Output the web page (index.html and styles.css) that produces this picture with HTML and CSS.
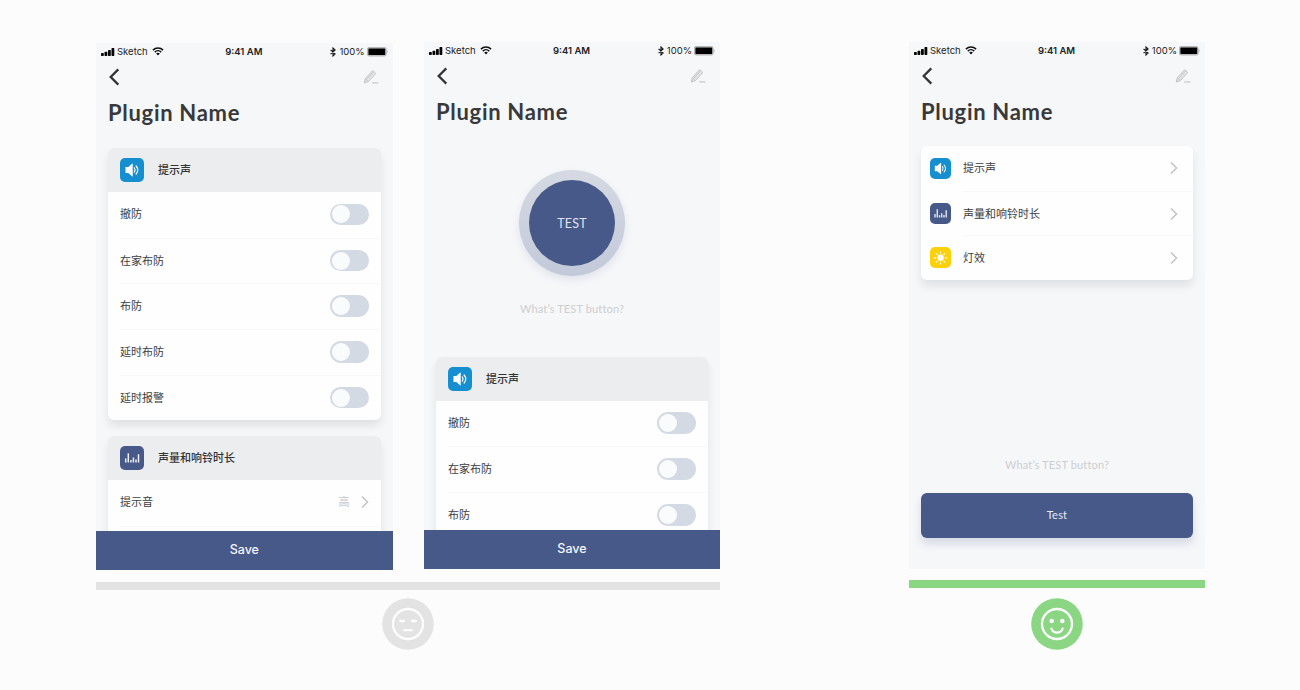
FILE: index.html
```
<!DOCTYPE html>
<html lang="zh-CN">
<head>
<meta charset="utf-8">
<title>Plugin Name</title>
<link rel="stylesheet" href="styles.css">
</head>
<body>
<svg width="0" height="0" class="defs">
  <symbol id="bars" viewBox="0 0 14 8"><rect x="0" y="5" width="2.8" height="3" rx=".7"/><rect x="3.5" y="3.7" width="2.8" height="4.3" rx=".7"/><rect x="7" y="2" width="2.8" height="6" rx=".7"/><rect x="10.5" y="0" width="2.8" height="8" rx=".7"/></symbol>
  <symbol id="wifi" viewBox="0 0 12 8.5"><path d="M.9 3.1a7.3 7.3 0 0 1 10.2 0M2.8 5.1a4.6 4.6 0 0 1 6.4 0" fill="none" stroke="#111" stroke-width="1.5"/><path d="M4.2 6.5a2.6 2.6 0 0 1 3.6 0L6 8.4z"/></symbol>
  <symbol id="bt" viewBox="0 0 6 10"><path d="M.6 2.8l4.5 4.3L3 9V1l2.1 1.9L.6 7.2" fill="none" stroke="#111" stroke-width="1.1"/></symbol>
  <symbol id="battery" viewBox="0 0 22 10"><rect x=".4" y=".4" width="18.8" height="8.6" rx="1.8" fill="#c6c7c9" stroke="#a5a6a8" stroke-width=".8"/><rect x="1.4" y="1.5" width="16.8" height="6.4" rx=".6" fill="#000"/><path d="M20 3.2q1.4 1.5 0 3z" fill="#999"/></symbol>
  <symbol id="back" viewBox="0 0 12 18"><path d="M10.3 1.4L2.7 9l7.6 7.6" fill="none" stroke="#333436" stroke-width="2.3"/></symbol>
  <symbol id="pencil" viewBox="0 0 16 15"><path d="M1.2 13l1-4.2L9 1.2q.7-.7 1.5 0l1.7 1.5q.7.7 0 1.5L5.4 11.6z" fill="#e3e4e6"/><g fill="none" stroke="#c0c2c4" stroke-width=".9"><path d="M1.2 13l1-4.2L9 1.2q.7-.7 1.5 0l1.7 1.5q.7.7 0 1.5L5.4 11.6zM2.2 8.8l3.2 2.8M3.8 9.2l6.7-7.3"/></g><path d="M1 13.3l.6-2.4 1.7 1.5z" fill="#c4c6c8"/><path d="M9.2 12.9h6.2" stroke="#c4c6c8" stroke-width="1.2"/></symbol>
  <symbol id="sound" viewBox="0 0 24 24"><path d="M5.5 8.9h2.8l4-3.4h.4v13h-.4l-4-3.4H5.5z" fill="#fff"/><path d="M14.3 9.8q1.6 2.2 0 4.4M16.1 8q3.3 4 0 8" fill="none" stroke="#fff" stroke-width="1.2" stroke-linecap="round"/></symbol>
  <symbol id="levels" viewBox="0 0 24 24"><path d="M5.7 16.6v-4M8.3 16.6V7.2M10.9 16.6v-2.6M13.4 16.6v-5M16 16.6v-3M18.5 16.6V8.2" fill="none" stroke="#eef0f6" stroke-width="1.5"/></symbol>
  <symbol id="sun" viewBox="0 0 24 24"><circle cx="12" cy="12.4" r="3.7" fill="#fff"/><path d="M12 5.4v1.4M12 18v1.4M5 12.4h1.4M17.6 12.4h1.4M7.1 7.5l1 1M15.9 16.3l1 1M7.1 17.3l1-1M15.9 8.5l1-1" stroke="#fff" stroke-width="1.3" stroke-linecap="round"/></symbol>
  <symbol id="next" viewBox="0 0 8 12"><path d="M1 .6L6.6 6 1 11.4" fill="none" stroke="#bfc1c3" stroke-width="1.4"/></symbol>
</svg>
<main class="board">
  <section class="group group-wide">
    <div class="phones">
      <article class="phone phone-low">
        <div class="status"><div class="carrier"><svg class="i-bars"><use href="#bars"/></svg><span class="carrier-name">Sketch</span><svg class="i-wifi"><use href="#wifi"/></svg></div><b class="clock">9:41 AM</b><div class="power"><svg class="i-bt"><use href="#bt"/></svg><span class="percent">100%</span><svg class="i-battery"><use href="#battery"/></svg></div></div>
        <div class="nav"><svg class="i-back"><use href="#back"/></svg><svg class="i-pencil"><use href="#pencil"/></svg></div>
        <h1 class="title">Plugin Name</h1>
        <div class="content">
          <div class="card">
            <div class="card-head"><svg class="tile blue"><use href="#sound"/></svg><span class="label">提示声</span></div>
            <div class="row"><span class="label">撤防</span><i class="toggle"></i></div>
            <div class="row"><span class="label">在家布防</span><i class="toggle"></i></div>
            <div class="row"><span class="label">布防</span><i class="toggle"></i></div>
            <div class="row"><span class="label">延时布防</span><i class="toggle"></i></div>
            <div class="row"><span class="label">延时报警</span><i class="toggle"></i></div>
          </div>
          <div class="card">
            <div class="card-head"><svg class="tile navy"><use href="#levels"/></svg><span class="label">声量和响铃时长</span></div>
            <div class="row"><span class="label">提示音</span><span class="value"><span class="label">高</span><svg class="i-next"><use href="#next"/></svg></span></div>
            <div class="row"></div>
          </div>
        </div>
        <div class="save">Save</div>
      </article>
      <article class="phone">
        <div class="status"><div class="carrier"><svg class="i-bars"><use href="#bars"/></svg><span class="carrier-name">Sketch</span><svg class="i-wifi"><use href="#wifi"/></svg></div><b class="clock">9:41 AM</b><div class="power"><svg class="i-bt"><use href="#bt"/></svg><span class="percent">100%</span><svg class="i-battery"><use href="#battery"/></svg></div></div>
        <div class="nav"><svg class="i-back"><use href="#back"/></svg><svg class="i-pencil"><use href="#pencil"/></svg></div>
        <h1 class="title">Plugin Name</h1>
        <div class="content">
          <div class="hero"><div class="ring"><div class="disc">TEST</div></div><p class="hint">What’s TEST button?</p></div>
          <div class="card">
            <div class="card-head"><svg class="tile blue"><use href="#sound"/></svg><span class="label">提示声</span></div>
            <div class="row"><span class="label">撤防</span><i class="toggle"></i></div>
            <div class="row"><span class="label">在家布防</span><i class="toggle"></i></div>
            <div class="row"><span class="label">布防</span><i class="toggle"></i></div>
          </div>
        </div>
        <div class="save">Save</div>
      </article>
    </div>
    <div class="bar bar-grey"></div>
    <svg class="face face-grey" viewBox="0 0 52 52"><circle cx="26" cy="26" r="25.8" fill="#e3e3e3"/><g fill="none" stroke="#fdfdfd" stroke-width="2.3" stroke-linecap="round"><circle cx="26" cy="26" r="15"/><path d="M18.2 23h3.9M30 23h3.9M22.2 32.2h7.6"/></g></svg>
  </section>
  <section class="group group-single">
    <article class="phone">
      <div class="status"><div class="carrier"><svg class="i-bars"><use href="#bars"/></svg><span class="carrier-name">Sketch</span><svg class="i-wifi"><use href="#wifi"/></svg></div><b class="clock">9:41 AM</b><div class="power"><svg class="i-bt"><use href="#bt"/></svg><span class="percent">100%</span><svg class="i-battery"><use href="#battery"/></svg></div></div>
      <div class="nav"><svg class="i-back"><use href="#back"/></svg><svg class="i-pencil"><use href="#pencil"/></svg></div>
      <h1 class="title">Plugin Name</h1>
      <div class="content content-menu">
        <div class="card">
          <div class="item"><svg class="tile small blue"><use href="#sound"/></svg><div class="item-body"><span class="label">提示声</span><svg class="i-next"><use href="#next"/></svg></div></div>
          <div class="item"><svg class="tile small navy"><use href="#levels"/></svg><div class="item-body"><span class="label">声量和响铃时长</span><svg class="i-next"><use href="#next"/></svg></div></div>
          <div class="item"><svg class="tile small yellow"><use href="#sun"/></svg><div class="item-body"><span class="label">灯效</span><svg class="i-next"><use href="#next"/></svg></div></div>
        </div>
        <p class="hint">What’s TEST button?</p>
        <div class="test">Test</div>
      </div>
    </article>
    <div class="bar bar-green"></div>
    <svg class="face" viewBox="0 0 52 52"><circle cx="26" cy="26" r="25.8" fill="#8ad683"/><circle cx="26" cy="26" r="15" fill="none" stroke="#fdfdfd" stroke-width="2.3"/><circle cx="20.7" cy="23" r="2.3" fill="#fdfdfd"/><circle cx="31.3" cy="23" r="2.3" fill="#fdfdfd"/><path d="M20.4 30.6q1.5 4 5.6 4t5.6-4" fill="none" stroke="#fdfdfd" stroke-width="2.3" stroke-linecap="round"/></svg>
  </section>
</main>
</body>
</html>
```
FILE: styles.css
```
* { box-sizing: border-box; }
body { margin: 0; background: #fcfcfc; font-family: "Lato", "Noto Sans CJK SC", sans-serif; color: #3c3d3f; }
svg { display: block; flex: none; }
.defs { position: absolute; }
.board { display: flex; gap: 189px; width: 1300px; height: 690px; padding: 42px 95px 0 96px; overflow: hidden; }
.group { display: flex; flex-direction: column; align-items: center; flex: none; }
.group-wide { width: 624px; }
.group-single { width: 296px; }
.phones { display: flex; justify-content: space-between; align-items: flex-start; width: 100%; height: 528px; }
.phone { display: flex; flex-direction: column; width: 296px; height: 527px; background: #f6f7f9; overflow: hidden; }
.phone-low { width: 296.6px; margin-top: 1px; }

.status { display: grid; grid-template-columns: 1fr auto 1fr; align-items: center; height: 17px; padding: 0 4px 0 5px; font: 9.5px/17px Inter, sans-serif; color: #222; }
.carrier, .power { display: flex; align-items: center; }
.power { justify-content: flex-end; }
.clock { margin-right: 2px; font-weight: 600; }
.carrier-name { margin: 0 4px 0 2px; }
.percent { margin: 0 2px 0 3px; }
.i-bars { width: 14px; height: 8px; }
.i-wifi { width: 12px; height: 8.5px; }
.i-bt { width: 6px; height: 10px; }
.i-battery { width: 22px; height: 10px; }

.nav { display: flex; justify-content: space-between; align-items: center; height: 34px; padding: 0 14px 0 12px; }
.i-back { width: 12px; height: 18px; }
.i-pencil { width: 16px; height: 15px; }
.title { margin: 0; padding-left: 12px; height: 54px; font-size: 22px; line-height: 37px; font-weight: 700; letter-spacing: .7px; color: #39393b; }

.content { display: flex; flex-direction: column; flex: 1; min-height: 0; gap: 15.5px; padding: 0 12px; overflow: hidden; }
.card { flex: none; border-radius: 6px; overflow: hidden; background: #fefefe; box-shadow: 0 6px 9px rgba(30, 50, 50, .1); font-size: 11px; }
.card-head { display: flex; align-items: center; gap: 14px; height: 44px; padding-left: 12px; background: #ecedef; font-weight: 500; color: #333; }
.label { padding-bottom: 2px; }
.tile { width: 24px; height: 24px; border-radius: 5px; }
.small { width: 21px; height: 21px; }
.blue { background: #168fd0; }
.navy { background: #475988; }
.yellow { background: #fdd008; }
.row { display: flex; justify-content: space-between; align-items: center; height: 45.7px; margin-left: 12px; padding: 0 12px 1px 0; }
.row + .row { border-top: 1px solid #f7f8f9; }
.toggle { width: 39px; height: 21.6px; padding: 1.8px 2px; border-radius: 11px; background: #d4dae3; }
.toggle::before { content: ""; display: block; width: 18px; height: 18px; border-radius: 50%; background: #fafbfc; }
.value { display: flex; align-items: center; gap: 11px; color: #c4c5c7; }
.i-next { width: 8px; height: 12px; }
.save { height: 39px; line-height: 37px; flex: none; background: #475988; color: #f4f6fa; text-align: center; font-family: Inter, sans-serif; font-size: 12.5px; font-weight: 500; }

.hero { display: flex; flex: none; flex-direction: column; align-items: center; height: 194px; padding-top: 22.6px; }
.ring { width: 106px; height: 106px; padding: 10px; border-radius: 50%; background: linear-gradient(#d5d9e2, #c2c9d9); box-shadow: 0 4px 8px rgba(71, 89, 136, .12); }
.disc { width: 86px; height: 86px; border-radius: 50%; background: #475988; color: #dfe3ed; font-size: 12.5px; line-height: 87px; letter-spacing: .2px; text-align: center; }
.hint { margin: 25.2px 0 0; font-size: 11px; line-height: 16px; letter-spacing: .15px; color: #cdcecf; text-align: center; }

.content-menu { gap: 0; margin-top: -1px; }
.item { display: flex; align-items: center; gap: 12px; height: 44.7px; padding-left: 9px; }
.item-body { display: flex; justify-content: space-between; align-items: center; flex: 1; height: 100%; padding-right: 15px; }
.item + .item .item-body { border-top: 1px solid #f7f8f9; }
.content-menu .hint { margin-top: 177px; }
.test { height: 44.5px; margin-top: 20px; border-radius: 6px; background: #475988; box-shadow: 0 6px 9px rgba(71, 89, 136, .18); color: #e9ecf3; font-size: 11px; line-height: 44px; letter-spacing: .2px; text-align: center; }

.bar { width: 100%; height: 8px; }
.bar-grey { margin-top: 12px; background: #e3e3e3; }
.bar-green { margin-top: 11px; background: #8ad683; }
.face { width: 52px; height: 52px; margin-top: 10px; }
.face-grey { margin-top: 8px; }
```
